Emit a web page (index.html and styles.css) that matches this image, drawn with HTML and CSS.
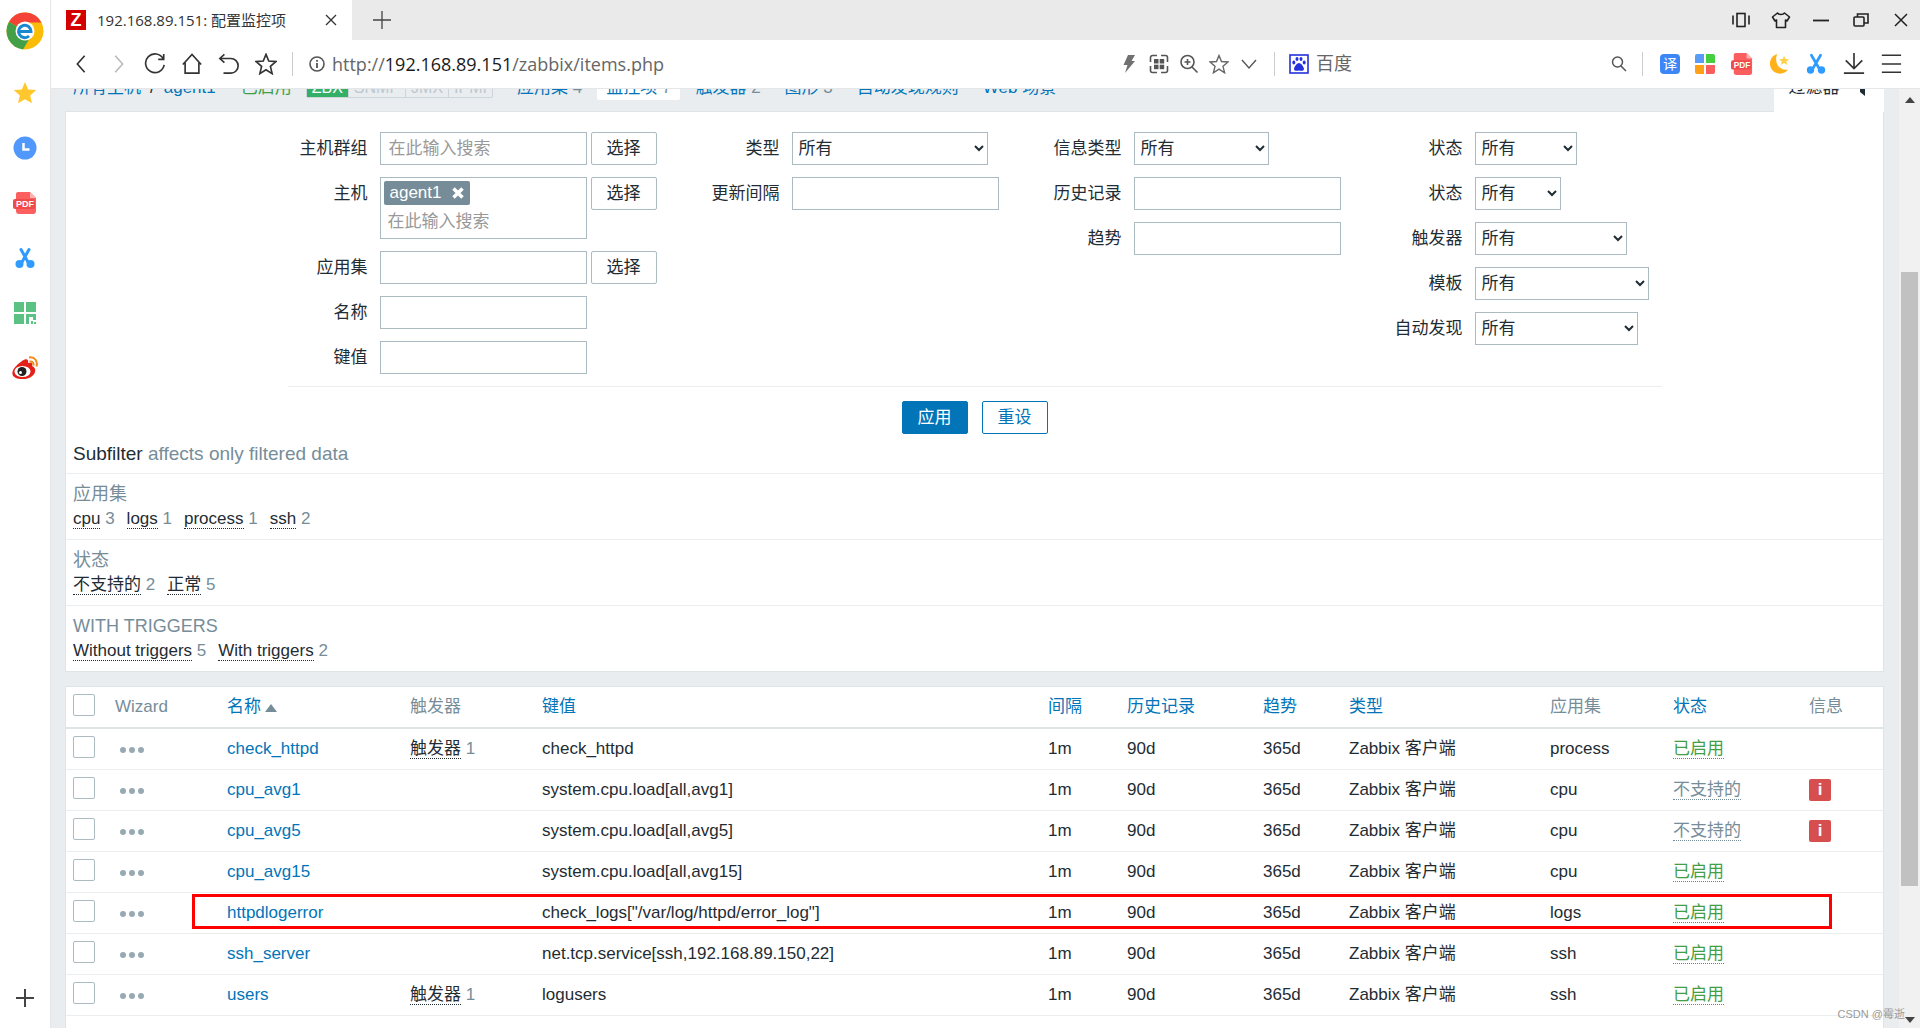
FILE: index.html
```html
<!DOCTYPE html>
<html lang="zh-CN">
<head>
<meta charset="utf-8">
<title>192.168.89.151: 配置监控项</title>
<link rel="stylesheet" href="styles.css">
</head>
<body>
<div class="browser">
  <nav class="dock" aria-label="侧边栏">
    <svg class="dock-logo" viewBox="0 0 38 38"><circle cx="19" cy="19" r="18.500" fill="#fbbc05"/><path d="M19 19 3 9.700A18.500 18.500 0 0 1 35.500 10.500L19 10.500Z" fill="#f44336"/><path d="M3 9.700A18.500 18.500 0 0 0 17 37.400L25 24 19 19Z" fill="#43a047"/><circle cx="19" cy="19" r="9.500" fill="#fff"/><path d="M12.500 19.500H25a6.200 6.200 0 1 0-2 4.500" fill="none" stroke="#1a88d0" stroke-width="3"/></svg>
    <svg class="dock-icon" viewBox="0 0 24 24"><path d="m12 1 3.200 7.400 8 .700-6 5.300 1.800 7.900L12 18.200 5 22.300l1.800-7.900-6-5.300 8-.700Z" fill="#ffc72e"/></svg>
    <svg class="dock-icon" viewBox="0 0 24 24"><circle cx="12" cy="12" r="11.500" fill="#5098fb"/><path d="M10.500 7v6.500h6" fill="none" stroke="#fff" stroke-width="2.500"/></svg>
    <svg class="dock-icon" viewBox="0 0 24 24"><path d="M5 1h12l6 6v13a3 3 0 0 1-3 3H6a3 3 0 0 1-3-3V3a2 2 0 0 1 2-2Z" fill="#fb5f5f"/><path d="M17 1v6h6" fill="#ffb0b0"/><rect y="8" width="22" height="10" rx="2" fill="#ef4b4b"/><text class="pdf" x="12" y="16" text-anchor="middle">PDF</text></svg>
    <svg class="dock-icon" viewBox="0 0 24 24"><g fill="none" stroke="#2f9bff" stroke-width="3" stroke-linecap="round"><path d="M8 3.500 15.500 17M16 3.500 8.500 17"/></g><g fill="#2f9bff"><circle cx="6.500" cy="18" r="4"/><circle cx="17.500" cy="18" r="4"/></g></svg>
    <svg class="dock-icon" viewBox="0 0 24 24"><g fill="#5bc283"><path d="M1 1h10v10H1zM13 1h10v10H13zM1 13h10v10H1zM13 13h10v6h-3v-3h-4v7h-3zM18 20h2v3h-2zM21 21h2v2h-2z"/></g></svg>
    <svg class="dock-weibo" viewBox="0 0 28 24"><path d="M11 5c4-3 7-2 6 2 4-1 5 0 4 3 7 3 2 13-9 13C-2 23-2 14 11 5Z" fill="#e32119"/><ellipse cx="11.500" cy="15.500" rx="8" ry="5.500" fill="#fff"/><circle cx="11" cy="15.500" r="4.500" fill="#222"/><circle cx="9.500" cy="16.500" r="1.500" fill="#fff"/><path d="M18 1.500c6-1 9 4 7.500 9M18.500 5.500c3-.500 4.500 1.500 3.800 4" fill="none" stroke="#f28a1c" stroke-width="2"/></svg>
    <svg class="dock-add" viewBox="0 0 20 20"><path d="M10 1v18M1 10h18" stroke="#444" stroke-width="2"/></svg>
  </nav>
  <div class="window">
    <header class="tabbar">
      <div class="tab">
        <span class="favicon">Z</span>
        <span class="tab-title">192.168.89.151: 配置监控项</span>
        <button class="plain" aria-label="关闭标签"><svg class="s12" viewBox="0 0 12 12"><path d="m1 1 10 10M11 1 1 11" stroke="#333" stroke-width="1.300"/></svg></button>
      </div>
      <button class="plain newtab" aria-label="新标签"><svg class="s18" viewBox="0 0 18 18"><path d="M9 0v18M0 9h18" stroke="#444" stroke-width="1.300"/></svg></button>
      <div class="window-controls">
        <svg class="s20" viewBox="0 0 20 20"><g fill="none" stroke="#222" stroke-width="1.600"><rect x="6" y="3.500" width="8" height="13"/><path d="M2 5.500v9M18 5.500v9"/></g></svg>
        <svg class="s20" viewBox="0 0 20 20"><path d="m6.500 3-5 4 2.500 4 1.500-1v7.500h9V10l1.500 1 2.500-4-5-4c-1.500 2-5.500 2-7 0Z" fill="none" stroke="#222" stroke-width="1.600" stroke-linejoin="round"/></svg>
        <svg class="s20" viewBox="0 0 20 20"><path d="M2 10.500h16" stroke="#222" stroke-width="1.800"/></svg>
        <svg class="s20" viewBox="0 0 20 20"><g fill="none" stroke="#222" stroke-width="1.600"><rect x="3" y="7" width="10" height="9" rx="1"/><path d="M6.500 7V4H17v9h-4"/></g></svg>
        <svg class="s20" viewBox="0 0 20 20"><path d="m4 4 12 12M16 4 4 16" stroke="#222" stroke-width="1.500"/></svg>
      </div>
    </header>
    <div class="toolbar">
      <div class="nav-icons">
        <svg class="s24" viewBox="0 0 24 24"><path d="m16 3-8 9 8 9" class="line"/></svg>
        <svg class="s24" viewBox="0 0 24 24"><path d="m9 3 8 9-8 9" class="line faint"/></svg>
        <svg class="s24" viewBox="0 0 24 24"><path d="M21 6.500A10.200 10.200 0 1 0 22 13M21.500 1v6h-6" class="line"/></svg>
        <svg class="s24" viewBox="0 0 24 24"><path d="m2 12.500 10-11 10 11M4.500 10.500V22h15V10.500" class="line"/></svg>
        <svg class="s24" viewBox="0 0 24 24"><path d="M7 1.500 2 6l5 4.500M2.500 6H14a8 8 0 0 1 0 16H6" class="line"/></svg>
        <svg class="s24" viewBox="0 0 24 24"><path d="m12 1.500 3 7.300 7.800.600-6 5.200 1.900 7.900L12 18.300l-6.700 4.200 1.900-7.900-6-5.200L9 8.800Z" class="line"/></svg>
      </div>
      <div class="address">
        <svg class="s16" viewBox="0 0 16 16"><circle cx="8" cy="8" r="7" fill="none" stroke="#555" stroke-width="1.600"/><path d="M8 7v5M8 4v1.700" stroke="#555" stroke-width="1.800"/></svg>
        <span class="url">http://<b>192.168.89.151</b>/zabbix/items.php</span>
      </div>
      <div class="page-tools">
        <svg class="s20" viewBox="0 0 20 20"><path d="M9 1h7l-3.500 6H16L6 19l2.500-8H4.500Z" fill="#707070"/></svg>
        <svg class="s20" viewBox="0 0 20 20"><g fill="#555"><rect x="5" y="5" width="4.500" height="4.500"/><rect x="10.700" y="5" width="4.500" height="4.500"/><rect x="5" y="10.700" width="4.500" height="4.500"/><rect x="10.700" y="10.700" width="4.500" height="4.500"/></g><path d="M1.500 8V3.500a2 2 0 0 1 2-2H8m4 0h4.500a2 2 0 0 1 2 2V8m0 4v4.500a2 2 0 0 1-2 2H12m-4 0H3.500a2 2 0 0 1-2-2V12" fill="none" stroke="#555" stroke-width="1.600"/></svg>
        <svg class="s20" viewBox="0 0 20 20"><g fill="none" stroke="#555" stroke-width="1.600"><circle cx="8.500" cy="8" r="6.500"/><path d="m13 13 5.500 5.500M5.500 8h6M8.500 5v6"/></g></svg>
        <svg class="s20" viewBox="0 0 20 20"><path d="m10 1.500 2.500 6 6.500.500-5 4.300 1.600 6.500L10 15.200l-5.600 3.600L6 12.300 1 8l6.500-.500Z" fill="none" stroke="#666" stroke-width="1.400"/></svg>
        <svg class="s20" viewBox="0 0 20 20"><path d="m3 6 7 8 7-8" fill="none" stroke="#555" stroke-width="1.400"/></svg>
      </div>
      <div class="search">
        <svg class="s20" viewBox="0 0 20 20"><rect x="1" y="1" width="18" height="18" fill="#fff" stroke="#2430dd" stroke-width="1.600"/><g fill="#2430dd"><ellipse cx="4.800" cy="8.500" rx="1.500" ry="1.900"/><ellipse cx="8" cy="5" rx="1.500" ry="2"/><ellipse cx="12" cy="5" rx="1.500" ry="2"/><ellipse cx="15.200" cy="8.500" rx="1.500" ry="1.900"/><path d="M10 9c2 0 5 4 5 6s-3 2-5 1.500C8 17 5 17 5 15s3-6 5-6Z"/></g></svg>
        <span class="engine">百度</span>
        <svg class="s16" viewBox="0 0 16 16"><g fill="none" stroke="#555" stroke-width="1.500"><circle cx="6.500" cy="6" r="5"/><path d="m10 10 5 5"/></g></svg>
      </div>
      <div class="extensions">
        <svg class="s20" viewBox="0 0 20 20"><rect width="20" height="20" rx="4" fill="#3d86f5"/><text class="translate" x="10" y="15" text-anchor="middle">译</text></svg>
        <svg class="s20" viewBox="0 0 20 20"><path d="M2 0h7v9H0V2a2 2 0 0 1 2-2Z" fill="#5b9bf8"/><path d="M11 0h7a2 2 0 0 1 2 2v7h-9Z" fill="#43cf3e"/><path d="M0 11h9v9H2a2 2 0 0 1-2-2Z" fill="#ffa116"/><path d="M11 11h9v7a2 2 0 0 1-2 2h-7Z" fill="#f95d5d"/></svg>
        <svg class="s24" viewBox="0 0 24 24"><path d="M5 0h12l6 6v15a3 3 0 0 1-3 3H6a3 3 0 0 1-3-3V2a2 2 0 0 1 2-2Z" fill="#fb5f5f"/><path d="M17 0v6h6" fill="#ffb0b0"/><rect y="8" width="22" height="10" rx="2" fill="#ef4b4b"/><text class="pdf" x="12" y="16" text-anchor="middle">PDF</text></svg>
        <svg class="s24" viewBox="0 0 24 24"><path d="M10 1a11 11 0 1 0 12 17C13 20 6 11 10 1Z" fill="#ffb21a"/><path d="m17.500 3 1.500 3.500 4 .300-3 2.500 1 3.700-3.500-2-3.500 2 1-3.700-3-2.500 4-.300Z" fill="#ffd045"/></svg>
        <svg class="s24" viewBox="0 0 24 24"><path d="M7 2.500 15.500 17M17 2.500 8.500 17" fill="none" stroke="#2f9bff" stroke-width="3" stroke-linecap="round"/><g fill="#2f9bff"><circle cx="6" cy="18.500" r="4"/><circle cx="18" cy="18.500" r="4"/></g></svg>
        <svg class="s24" viewBox="0 0 24 24"><path d="M12 0v16M3 8l9 9 9-9M1 22h22" class="line"/></svg>
        <svg class="s24" viewBox="0 0 24 24"><path d="M2 2.500h21M2 12h21M2 21h21" class="line"/></svg>
      </div>
    </div>
    <div class="viewport">
      <main class="page">
        <div class="host-nav">
          <a class="n-all" href="#">所有主机</a><span class="n-sep">/</span><a class="n-host" href="#">agent1</a>
          <a class="n-on green" href="#">已启用</a>
          <span class="protocols"><span class="zbx">ZBX</span><span>SNMP</span><span>JMX</span><span>IPMI</span></span>
          <span class="n-item"><a href="#">应用集</a> <small>4</small></span>
          <span class="n-item active"><a href="#">监控项</a> <small>7</small></span>
          <span class="n-item"><a href="#">触发器</a> <small>2</small></span>
          <span class="n-item"><a href="#">图形</a> <small>3</small></span>
          <span class="n-item"><a href="#">自动发现规则</a></span>
          <span class="n-item"><a href="#">Web 场景</a></span>
          <a class="filter-tab" href="#">过滤器 <svg class="s16" viewBox="0 0 16 16"><path d="M1 1h14l-4 6v9l-5-4V7Z" fill="#1f2c33"/></svg></a>
        </div>
        <section class="card filter">
          <form class="form">
            <div class="fields">
              <div class="col c1">
                <label for="group">主机群组</label><div class="control"><input id="group" class="w-input" placeholder="在此输入搜索"><button type="button" class="btn">选择</button></div>
                <label for="host">主机</label><div class="control"><div class="multi w-input"><span class="chip">agent1<svg class="s12" viewBox="0 0 12 12"><path d="m1.500 1.500 9 9M10.500 1.500l-9 9" stroke="#fff" stroke-width="3.500"/></svg></span><input id="host" placeholder="在此输入搜索"></div><button type="button" class="btn">选择</button></div>
                <label for="app">应用集</label><div class="control"><input id="app" class="w-input"><button type="button" class="btn">选择</button></div>
                <label for="name">名称</label><div class="control"><input id="name" class="w-input"></div>
                <label for="key">键值</label><div class="control"><input id="key" class="w-input"></div>
              </div>
              <div class="col c2">
                <label for="type">类型</label><div class="control"><select id="type" class="w-type"><option>所有</option></select></div>
                <label for="delay">更新间隔</label><div class="control"><input id="delay" class="w-input"></div>
              </div>
              <div class="col c3">
                <label for="info">信息类型</label><div class="control"><select id="info" class="w-info"><option>所有</option></select></div>
                <label for="history">历史记录</label><div class="control"><input id="history" class="w-input"></div>
                <label for="trends">趋势</label><div class="control"><input id="trends" class="w-input"></div>
              </div>
              <div class="col c4">
                <label for="state">状态</label><div class="control"><select id="state" class="w-state"><option>所有</option></select></div>
                <label for="status">状态</label><div class="control"><select id="status" class="w-status"><option>所有</option></select></div>
                <label for="trig">触发器</label><div class="control"><select id="trig" class="w-trig"><option>所有</option></select></div>
                <label for="tpl">模板</label><div class="control"><select id="tpl" class="w-tpl"><option>所有</option></select></div>
                <label for="disc">自动发现</label><div class="control"><select id="disc" class="w-disc"><option>所有</option></select></div>
              </div>
            </div>
            <div class="actions"><button type="button" class="btn primary">应用</button><button type="button" class="btn outline">重设</button></div>
          </form>
          <h4 class="sub-title">Subfilter <span>affects only filtered data</span></h4>
          <div class="sub"><h3>应用集</h3><p><span><a href="#">cpu</a> 3</span><span><a href="#">logs</a> 1</span><span><a href="#">process</a> 1</span><span><a href="#">ssh</a> 2</span></p></div>
          <div class="sub"><h3>状态</h3><p><span><a href="#">不支持的</a> 2</span><span><a href="#">正常</a> 5</span></p></div>
          <div class="sub"><h3>WITH TRIGGERS</h3><p><span><a href="#">Without triggers</a> 5</span><span><a href="#">With triggers</a> 2</span></p></div>
        </section>
        <section class="card items">
          <table>
            <colgroup><col class="k1"><col class="k2"><col class="k3"><col class="k4"><col><col class="k6"><col class="k7"><col class="k8"><col class="k9"><col class="k10"><col class="k11"><col class="k12"></colgroup>
            <thead><tr><th><input type="checkbox" aria-label="全选"></th><th>Wizard</th><th><a href="#">名称<i class="sort"></i></a></th><th>触发器</th><th><a href="#">键值</a></th><th><a href="#">间隔</a></th><th><a href="#">历史记录</a></th><th><a href="#">趋势</a></th><th><a href="#">类型</a></th><th>应用集</th><th><a href="#">状态</a></th><th>信息</th></tr></thead>
            <tbody>
              <tr><td><input type="checkbox" aria-label="check_httpd"></td><td><button class="dots" aria-label="菜单"><i></i><i></i><i></i></button></td><td><a href="#">check_httpd</a></td><td><a class="dot-link" href="#">触发器</a> <small>1</small></td><td>check_httpd</td><td>1m</td><td>90d</td><td>365d</td><td>Zabbix 客户端</td><td>process</td><td><a class="dot-link green" href="#">已启用</a></td><td></td></tr>
              <tr><td><input type="checkbox" aria-label="cpu_avg1"></td><td><button class="dots" aria-label="菜单"><i></i><i></i><i></i></button></td><td><a href="#">cpu_avg1</a></td><td></td><td>system.cpu.load[all,avg1]</td><td>1m</td><td>90d</td><td>365d</td><td>Zabbix 客户端</td><td>cpu</td><td><a class="dot-link grey" href="#">不支持的</a></td><td><span class="err">i</span></td></tr>
              <tr><td><input type="checkbox" aria-label="cpu_avg5"></td><td><button class="dots" aria-label="菜单"><i></i><i></i><i></i></button></td><td><a href="#">cpu_avg5</a></td><td></td><td>system.cpu.load[all,avg5]</td><td>1m</td><td>90d</td><td>365d</td><td>Zabbix 客户端</td><td>cpu</td><td><a class="dot-link grey" href="#">不支持的</a></td><td><span class="err">i</span></td></tr>
              <tr><td><input type="checkbox" aria-label="cpu_avg15"></td><td><button class="dots" aria-label="菜单"><i></i><i></i><i></i></button></td><td><a href="#">cpu_avg15</a></td><td></td><td>system.cpu.load[all,avg15]</td><td>1m</td><td>90d</td><td>365d</td><td>Zabbix 客户端</td><td>cpu</td><td><a class="dot-link green" href="#">已启用</a></td><td></td></tr>
              <tr class="marked"><td><input type="checkbox" aria-label="httpdlogerror"></td><td><button class="dots" aria-label="菜单"><i></i><i></i><i></i></button></td><td><a href="#">httpdlogerror</a></td><td></td><td>check_logs["/var/log/httpd/error_log"]</td><td>1m</td><td>90d</td><td>365d</td><td>Zabbix 客户端</td><td>logs</td><td><a class="dot-link green" href="#">已启用</a></td><td></td></tr>
              <tr><td><input type="checkbox" aria-label="ssh_server"></td><td><button class="dots" aria-label="菜单"><i></i><i></i><i></i></button></td><td><a href="#">ssh_server</a></td><td></td><td>net.tcp.service[ssh,192.168.89.150,22]</td><td>1m</td><td>90d</td><td>365d</td><td>Zabbix 客户端</td><td>ssh</td><td><a class="dot-link green" href="#">已启用</a></td><td></td></tr>
              <tr><td><input type="checkbox" aria-label="users"></td><td><button class="dots" aria-label="菜单"><i></i><i></i><i></i></button></td><td><a href="#">users</a></td><td><a class="dot-link" href="#">触发器</a> <small>1</small></td><td>logusers</td><td>1m</td><td>90d</td><td>365d</td><td>Zabbix 客户端</td><td>ssh</td><td><a class="dot-link green" href="#">已启用</a></td><td></td></tr>
            </tbody>
          </table>
        </section>
      </main>
      <div class="scrollbar"><i class="up"></i><div class="track"><div class="thumb"></div></div><i class="down"></i></div>
      <span class="watermark">CSDN @霉逝</span>
    </div>
  </div>
</div>
</body>
</html>
```

FILE: styles.css
```css
* { box-sizing: border-box; }
body { margin: 0; font: 17px/24px "Liberation Sans", "Noto Sans CJK SC", sans-serif; color: #1f2c33; background: #fff; }
a { color: #0275b8; text-decoration: none; }
small { font-size: 17px; color: #768d99; }
button, input, select { font: inherit; color: inherit; }
svg { flex: none; display: block; }
.s12 { width: 12px; height: 12px; }
.s16 { width: 16px; height: 16px; }
.s18 { width: 18px; height: 18px; }
.s20 { width: 20px; height: 20px; }
.s24 { width: 22px; height: 22px; }
.line { fill: none; stroke: #333; stroke-width: 1.8; }
.faint { stroke: #bbb; }
.pdf { font: bold 9px "Liberation Sans", sans-serif; fill: #fff; }
.translate { font: 14px "Noto Sans CJK SC", sans-serif; fill: #fff; }
.plain { border: 0; background: none; padding: 0; }

.browser { display: flex; height: 100vh; overflow: hidden; }
.dock { width: 51px; flex: none; display: flex; flex-direction: column; align-items: center; gap: 31px; padding: 12px 0 20px; border-right: 1px solid #e4e6e8; }
.dock-logo { width: 38px; height: 38px; }
.dock-icon { width: 24px; height: 24px; }
.dock-weibo { width: 28px; height: 24px; }
.dock-add { width: 20px; height: 20px; margin-top: auto; }
.window { flex: 1; min-width: 0; display: flex; flex-direction: column; }

.tabbar { display: flex; align-items: center; height: 40px; flex: none; background: #eaeaea; }
.tab { display: flex; align-items: center; width: 301px; height: 40px; padding: 0 15px; gap: 11px; background: #fff; }
.favicon { width: 20px; height: 20px; background: #d40000; color: #fff; font: bold 18px/20px "Liberation Sans", sans-serif; text-align: center; }
.tab-title { flex: 1; font: 15px/20px "Open Sans", "Noto Sans CJK SC", sans-serif; color: #333; white-space: nowrap; }
.newtab { margin-left: 21px; }
.window-controls { display: flex; gap: 20px; margin-left: auto; padding-right: 9px; }
.toolbar { display: flex; align-items: center; height: 49px; flex: none; border-bottom: 1px solid #e4e6e8; }
.nav-icons { display: flex; gap: 15px; padding: 0 15px 0 19px; }
.address { display: flex; align-items: center; gap: 7px; flex: 1; height: 24px; border-left: 1px solid #ccc; padding-left: 16px; }
.url { font: 18px/24px "Open Sans", sans-serif; color: #666; }
.url b { font-weight: 400; color: #1a1a1a; }
.page-tools { display: flex; gap: 10px; padding-right: 15px; }
.search { display: flex; align-items: center; gap: 7px; width: 369px; height: 24px; border: solid #ccc; border-width: 0 1px; padding: 0 15px 0 14px; }
.engine { flex: 1; font-size: 18px; color: #666; }
.extensions { display: flex; align-items: center; justify-content: space-between; width: 277px; padding: 0 18px 0 17px; }

.viewport { position: relative; flex: 1; min-height: 0; display: flex; background: #e9edf0; overflow: hidden; }
.page { flex: 1; min-width: 0; padding: 0 15px 0 14px; margin-top: -15px; }
.host-nav { display: flex; height: 37px; padding: 2px 0 0 8px; white-space: nowrap; }
.n-sep { padding: 0 9px; }
.n-on { padding: 0 14px 0 25px; }
.green { color: #429e47; }
.grey { color: #768d99; }
.protocols { display: flex; height: 22px; border: 1px solid #ccd5d9; border-radius: 2px; font-size: 16px; line-height: 22px; color: #bcc8ce; margin-right: 15px; }
.protocols span { padding: 0 5px; border-left: 1px solid #ccd5d9; }
.protocols .zbx { background: #34af67; color: #fff; border: 0; }
.n-item { height: 24px; padding: 0 9px; margin-right: 6px; }
.active { background: #fff; border-radius: 0 0 2px 2px; }
.filter-tab { display: flex; align-items: center; justify-content: center; gap: 14px; height: 36px; width: 110px; margin-left: auto; padding-bottom: 12px; background: #fff; color: #1f2c33; position: relative; z-index: 1; }

.card { background: #fff; border: 1px solid #dfe4e7; }
.form { max-width: 1374px; margin: 0 auto; }
.fields { display: grid; grid-template-columns: 369fr 344fr 340fr 321fr; padding: 20px 0 12px; border-bottom: 1px solid #ebeef0; }
.col { display: grid; gap: 12px; align-content: start; }
.c1 { grid-template-columns: 80px 1fr; }
.c2 { grid-template-columns: 123px 1fr; }
.c3 { grid-template-columns: 121px 1fr; }
.c4 { grid-template-columns: 122px 1fr; }
.col label { text-align: right; line-height: 33px; white-space: nowrap; }
.control { display: flex; align-items: flex-start; gap: 4px; }
.w-input { width: 207px; }
.w-type { width: 196px; }
.w-info { width: 135px; }
.w-state { width: 102px; }
.w-status { width: 86px; }
.w-trig { width: 152px; }
.w-tpl { width: 174px; }
.w-disc { width: 163px; }
.control > input, select { height: 33px; border: 1px solid #acbbc2; background: #fff; padding: 0 8px; border-radius: 0; }
select { padding: 0 4px 0 2px; }
::placeholder { color: #999; opacity: 1; }
.multi { height: 62px; border: 1px solid #acbbc2; padding: 3px; display: flex; flex-direction: column; align-items: flex-start; gap: 3px; }
.multi input { width: 100%; height: 28px; border: 0; padding: 0 4px; background: none; }
.chip { display: flex; align-items: center; gap: 10px; height: 25px; padding: 0 6px; background: #768d99; color: #fff; border-radius: 2px; }
.btn { width: 66px; height: 33px; padding: 0; border: 1px solid #acbbc2; border-radius: 2px; background: #fff; }
.actions { display: flex; justify-content: center; gap: 14px; padding: 14px 0 7px; }
.primary { background: #0275b8; border-color: #0275b8; color: #fff; }
.outline { border-color: #0275b8; color: #0275b8; }
.sub-title { margin: 0; padding: 0 7px 7px; font-size: 19px; line-height: 25px; font-weight: 400; }
.sub-title span, .sub { color: #768d99; }
.sub { height: 66px; border-top: 1px solid #ebeef0; padding: 8px 7px; }
.sub h3 { margin: 0; font-size: 18px; line-height: 25px; font-weight: 400; }
.sub p { margin: 0; display: flex; gap: 12px; }
.sub a, .dot-link { border-bottom: 1px dotted; }
.sub a { color: #1f2c33; }

.items { margin-top: 14px; min-height: 400px; }
table { width: 100%; table-layout: fixed; border-collapse: collapse; }
th { height: 41px; font-weight: 400; text-align: left; color: #768d99; border-bottom: 2px solid #dfe4e7; }
td { height: 41px; border-bottom: 1px solid #ebeef0; }
th, td { padding: 0 0 0 7px; white-space: nowrap; }
.k1 { width: 42px; }
.k2 { width: 112px; }
.k3 { width: 183px; }
.k4 { width: 132px; }
.k6 { width: 79px; }
.k7 { width: 136px; }
.k8 { width: 86px; }
.k9 { width: 201px; }
.k10 { width: 123px; }
.k11 { width: 136px; }
.k12 { width: 81px; }
td .dot-link { color: #1f2c33; }
td .green { color: #429e47; }
td .grey { color: #768d99; }
input[type=checkbox] { appearance: none; display: block; width: 22px; height: 22px; margin: 0 0 4px; border: 1px solid #acbbc2; border-radius: 2px; background: #fff; }
.sort { display: inline-block; margin-left: 4px; border: solid transparent; border-width: 0 6px 8px; border-bottom-color: #768d99; }
.dots { display: flex; gap: 3px; border: 0; padding: 3px 5px 0; background: none; }
.dots i { width: 6px; height: 6px; border-radius: 50%; background: #97aab3; }
.err { display: block; width: 22px; height: 22px; border-radius: 2px; background: #d64e4e; color: #fff; font-weight: 700; line-height: 22px; text-align: center; }
.marked { position: relative; }
.marked td:first-child::after { content: ""; position: absolute; left: 126px; right: 51px; top: 2px; bottom: 4px; border: 3px solid #f00; pointer-events: none; }

.scrollbar { width: 21px; flex: none; display: flex; flex-direction: column; align-items: center; padding: 8px 0 5px; background: #f1f1f1; }
.track { flex: 1; width: 17px; padding-top: 169px; }
.thumb { height: 614px; background: #c1c1c1; }
.up, .down { border: solid transparent; border-width: 0 5px 6px; border-bottom-color: #444; }
.down { border-width: 6px 5px 0; border-top-color: #444; }
.watermark { position: absolute; right: 15px; bottom: 4px; font-size: 11px; line-height: 20px; color: #999; }
```
